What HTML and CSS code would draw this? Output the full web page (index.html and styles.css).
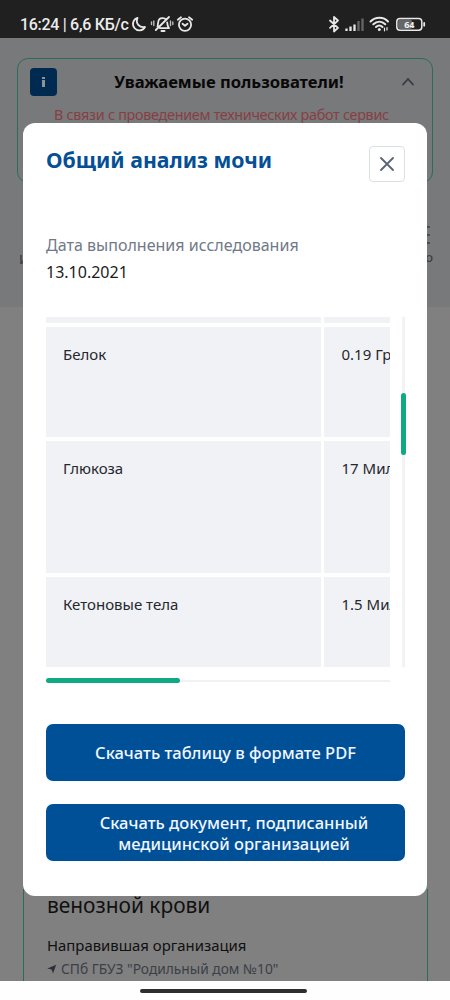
FILE: index.html
```html
<!DOCTYPE html>
<html lang="ru">
<head>
<meta charset="utf-8">
<meta name="viewport" content="width=device-width, initial-scale=1">
<title>Общий анализ мочи</title>
<link rel="stylesheet" href="styles.css">
</head>
<body>
<div class="screen">
  <header class="status">
    <span class="status-text">16:24 | 6,6 КБ/с</span>
    <svg class="status-left" width="64" height="18" viewBox="0 0 64 18" fill="none" stroke="#e8e8e8" stroke-width="1.8" stroke-linecap="round" stroke-linejoin="round">
      <path d="M6.500 2.800A6.400 6.400 0 1 0 14 12C8.500 13 4.200 8.500 6.500 2.800Z"/>
      <path d="M26.500 11.500C27.300 9.500 26.600 5.500 28.500 4C30 2.700 33.500 2.700 35 4.500M36.200 7.500C36.200 10 36.800 11.500 38 13.200H29M24.800 15L38 2"/>
      <path d="M30.500 16H33.500" stroke-width="2"/>
      <path d="M22.800 6V10.500M20.500 7V9.500M39.500 6V10.500M41.800 7V9.500" stroke-width="1.400" stroke="#bbb"/>
      <circle cx="54" cy="9.800" r="6.100"/>
      <path d="M51.500 8.800L54 10.800L56.500 8.800M46.800 4.700L50 2.200M61.200 4.700L58 2.200"/>
    </svg>
    <svg class="status-right" width="98" height="18" viewBox="0 0 98 18" fill="none" stroke="#e8e8e8" stroke-linecap="round" stroke-linejoin="round">
      <path d="M2 5.500L10 12.800L6 16.500V2L10 5.500L2 12.800" stroke-width="1.800"/>
      <g stroke-width="2.300" stroke-linecap="butt"><path d="M18.500 13.500V16M22.500 11.500V16M26.500 9.500V16"/><path d="M30.500 6V16M34.500 3.500V16" stroke="#666"/></g>
      <path d="M42.500 6.500C47.500 1.500 55.500 1.500 60 6.500M45.300 9.300C49 5.800 53.800 5.800 57.300 9.300M48 12C50 10.200 52.500 10.200 54.500 12" stroke-width="2"/>
      <circle cx="51.300" cy="14.500" r="1.500" fill="#e8e8e8" stroke="none"/>
      <path d="M56.500 13V15.800M59 12.500V15" stroke-width="1.200"/>
      <rect x="70" y="4.500" width="14" height="9.500" rx="2" fill="#666" stroke="none"/>
      <rect x="68.800" y="3.400" width="25" height="11.800" rx="3.200" stroke-width="1.500"/>
      <path d="M96.200 8V10.700" stroke-width="1.800"/>
      <text class="battery" x="81.300" y="12.700" text-anchor="middle">64</text>
    </svg>
  </header>
  <main class="page">
    <section class="top">
      <div class="notice">
        <div class="notice-head">
          <span class="info"><span class="info-dot"></span><span class="info-stem"></span></span>
          <strong class="notice-title">Уважаемые пользователи!</strong>
          <svg class="chevron" width="14" height="10" viewBox="0 0 14 10" fill="none" stroke="#34383f" stroke-width="1.700" stroke-linecap="round"><path d="M2 7.500L7 2L12 7.500"/></svg>
        </div>
        <p class="notice-text">В связи с проведением технических работ сервис</p>
      </div>
      <div class="tabs">
        <span class="tab-left">И</span>
        <span class="tab-right"><svg width="7" height="20" viewBox="0 0 7 20" stroke="#3c4046" stroke-width="1.500"><path d="M0 2H4M0 10H4M0 18H4"/></svg><span>о</span></span>
      </div>
    </section>
    <section class="card">
      <h2 class="card-title">венозной крови</h2>
      <p class="card-label">Направившая организация</p>
      <p class="card-org"><svg width="10" height="10" viewBox="0 0 10 10"><path d="M0.300 4.500L9.200 0.800L6 9.500L4.600 5.600Z" fill="#2c3036"/></svg><span>СПб ГБУЗ "Родильный дом №10"</span></p>
    </section>
  </main>
  <footer class="navbar"><span class="home"></span></footer>

  <div class="modal">
    <div class="modal-head">
      <h1 class="title">Общий анализ мочи</h1>
      <button class="close" aria-label="Закрыть"><svg width="16" height="16" viewBox="0 0 16 16" stroke="#5b6676" stroke-width="1.900" stroke-linecap="round"><path d="M2 2L14 14M14 2L2 14"/></svg></button>
    </div>
    <p class="date-label">Дата выполнения исследования</p>
    <p class="date">13.10.2021</p>
    <div class="results">
      <div class="table">
        <div class="cell"></div><div class="cell"></div>
        <div class="cell">Белок</div><div class="cell">0.19 Гр</div>
        <div class="cell">Глюкоза</div><div class="cell">17 Мил</div>
        <div class="cell">Кетоновые тела</div><div class="cell">1.5 Мил</div>
      </div>
      <div class="vtrack"><div class="vthumb"></div></div>
      <div class="htrack"><div class="hthumb"></div></div>
    </div>
    <div class="actions">
      <button class="action">Скачать таблицу в формате PDF</button>
      <button class="action action-doc">Скачать документ, подписанный<br>медицинской организацией</button>
    </div>
  </div>
</div>
</body>
</html>
```

FILE: styles.css
```css
* { box-sizing: border-box; }
body, h1, h2, p { margin: 0; }
body { font-family: "Noto Sans", sans-serif; }
.screen { position: relative; display: flex; flex-direction: column; width: 450px; height: 1000px; overflow: hidden; }
.status { display: flex; align-items: flex-start; height: 38px; padding: 15px 24px 0 20px; background: #202020; color: #ececec; flex: none; }
.status-text { font: 500 16px/20px Roboto, sans-serif; letter-spacing: -0.300px; width: 109px; white-space: nowrap; }
.status-left { margin-left: 2px; }
.status-right { margin-left: auto; }
.battery { font: 700 9px "Noto Sans", sans-serif; fill: #f2f2f2; stroke: none; }
.page { display: flex; flex-direction: column; justify-content: space-between; height: 943px; background: #808080; }
.top { height: 269px; padding: 20px 17px 0; background: #78797b; }
.notice { height: 125px; border: 1px solid #2b6c5c; border-radius: 11px; padding: 9px 17px 0 12px; }
.notice-head { display: flex; align-items: center; height: 28px; }
.info { display: flex; flex-direction: column; align-items: center; justify-content: center; gap: 1px; width: 27px; height: 28px; border-radius: 4px; background: #002a50; }
.info-dot { width: 3px; height: 2px; background: #8d9498; }
.info-stem { width: 3px; height: 7px; background: #8d9498; }
.notice-title { flex: 1; text-align: center; font-size: 16.600px; line-height: 22px; color: #080808; white-space: nowrap; }
.notice-text { margin-top: 9px; padding-left: 24px; font-size: 14.400px; letter-spacing: -0.300px; line-height: 20px; color: #873f43; white-space: nowrap; }
.tabs { display: flex; justify-content: space-between; padding: 42px 0 0 2px; font-size: 13px; line-height: 18px; font-weight: 500; color: #3c4046; }
.tab-left { padding-top: 25px; }
.tab-right { display: flex; flex-direction: column; align-items: flex-end; gap: 3px; }
.card { height: 92px; width: 405px; margin-left: 23px; padding: 0 23px; border: solid #2b6c5c; border-width: 0 1px; white-space: nowrap; }
.card-title { font-weight: 400; font-size: 20.900px; line-height: 32px; color: #101010; }
.card-label { margin-top: 13px; font-size: 14.900px; line-height: 22px; color: #101010; }
.card-org { display: flex; align-items: center; gap: 4px; margin-top: 3px; font-size: 13.750px; line-height: 20px; color: #3b3f46; }
.navbar { display: flex; justify-content: center; height: 19px; padding-top: 8px; background: #fefefe; flex: none; }
.home { width: 167px; height: 4px; margin-right: 4px; border-radius: 2px; background: #2e2e2e; }
.modal { position: absolute; left: 23px; top: 123px; width: 404px; height: 773px; padding: 23px 22px 0 23px; border-radius: 12px; background: #fff; }
.modal-head { display: flex; justify-content: space-between; height: 36px; }
.title { font-size: 21.250px; line-height: 28px; color: #054f96; white-space: nowrap; }
.close { display: flex; align-items: center; justify-content: center; width: 36px; height: 36px; padding: 0; border: 1px solid #dcdfe4; border-radius: 4px; background: #fff; }
.date-label { margin-top: 52px; font-size: 16.050px; line-height: 22px; color: #717987; white-space: nowrap; }
.date { margin-top: 5px; font-size: 16px; line-height: 23px; color: #1b1c20; }
.results { display: grid; grid-template-columns: 344px 5px; grid-template-rows: 350px 5px; column-gap: 11px; row-gap: 11px; margin-top: 33px; }
.table { display: grid; grid-template-columns: 275px 90px; grid-template-rows: 6px 110px 132px 90px; column-gap: 3px; row-gap: 4px; overflow: hidden; }
.cell { overflow: hidden; padding: 16px 0 0 17px; background: #f0f2f6; font-size: 15px; line-height: 22px; color: #26282d; white-space: nowrap; }
.cell:nth-child(even) { padding-left: 17.500px; }
.cell:nth-child(-n+2) { padding: 0; }
.vtrack { background: linear-gradient(#f2f3f5, #f2f3f5) center / 3px 100% no-repeat; padding-top: 76px; }
.vthumb { height: 62px; border-radius: 3px; background: #11a985; }
.htrack { background: linear-gradient(#f0f1f3, #f0f1f3) center / 100% 2px no-repeat; }
.hthumb { width: 134px; height: 5px; border-radius: 3px; background: #11a985; }
.actions { display: flex; flex-direction: column; gap: 23px; margin-top: 41px; }
.action { height: 57px; padding: 1px 0 0; border: 0; border-radius: 7px; background: #005098; color: #f2f7ff; font: 500 16.500px/21.500px "Noto Sans", sans-serif; white-space: nowrap; }
.action-doc { padding-left: 17px; }
```
